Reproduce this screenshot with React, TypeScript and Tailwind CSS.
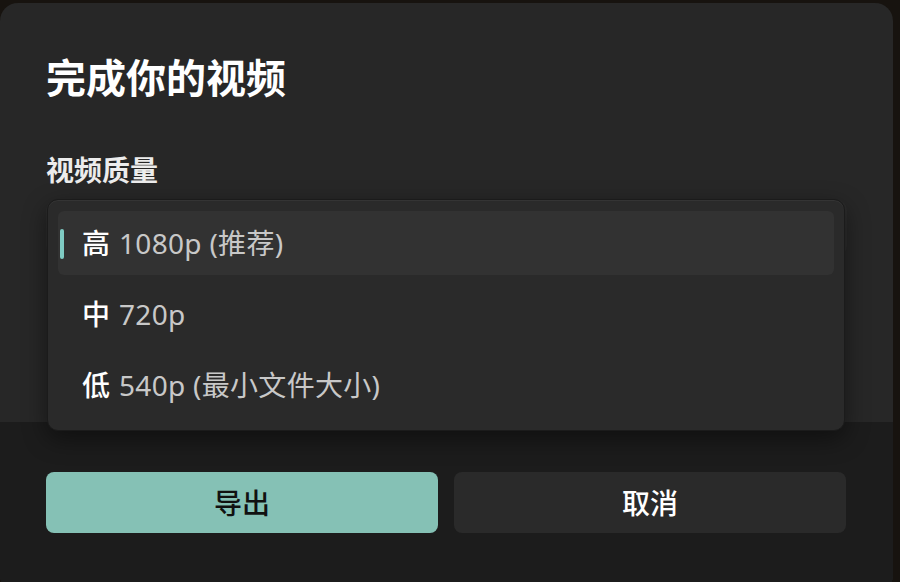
import { useState } from "react";

const QUALITIES = [
  { key: "high", tag: "高", label: "1080p (推荐)" },
  { key: "mid", tag: "中", label: "720p" },
  { key: "low", tag: "低", label: "540p (最小文件大小)" },
];

const font = { fontFamily: '"Noto Sans", "Noto Sans CJK SC", sans-serif' };

export default function App() {
  const [selected, setSelected] = useState("high");

  return (
    <div className="w-[900px] h-[582px] overflow-hidden bg-[#17130f] pt-[3px]" style={font}>
      <div className="w-[893px] h-[590px] rounded-[18px] bg-[#272727] flex flex-col overflow-hidden">
        {/* body */}
        <div className="h-[419px] px-[46px] pt-[50px] flex flex-col">
          <h1 className="text-[40px] leading-[50px] font-bold text-white">完成你的视频</h1>
          <p className="mt-[49px] text-[28px] leading-[36px] font-semibold text-[#ececec]">视频质量</p>

          <div className="relative mt-[12px]">
            <div className="h-[56px] rounded-[10px] bg-[#2c2c2c]" />
            <div className="absolute left-[1px] -top-[1px] w-[798px] rounded-[11px] border border-[#1b1b1b] bg-[#2a2a2a] pl-[10px] pr-[10px] pt-[11px] pb-[13px] flex flex-col gap-[7px] shadow-[0_8px_24px_rgba(0,0,0,0.45),inset_0_1px_0_rgba(255,255,255,0.05)]">
              {QUALITIES.map((q) => {
                const active = q.key === selected;
                return (
                  <button
                    key={q.key}
                    type="button"
                    onClick={() => setSelected(q.key)}
                    className={`relative h-[64px] rounded-[6px] pl-[24px] flex items-center text-left text-[28px] ${
                      active ? "bg-[#323232]" : ""
                    }`}
                  >
                    {active && (
                      <span className="absolute left-[2px] top-[18px] h-[30px] w-[4px] rounded-full bg-[#7fcbc3]" />
                    )}
                    <span className="text-white font-medium">{q.tag}</span>
                    <span className="ml-[9px] text-[#c8c8c8] tracking-[0.3px]">{q.label}</span>
                  </button>
                );
              })}
            </div>
          </div>
        </div>

        {/* footer */}
        <div className="flex-1 bg-[#1c1c1c] px-[46px] pt-[50px] flex gap-[16px] pr-[47px]">
          <button
            type="button"
            className="flex-1 h-[61px] rounded-[8px] bg-[#85c1b5] text-[28px] font-medium text-[#111]"
          >
            导出
          </button>
          <button
            type="button"
            className="flex-1 h-[61px] rounded-[8px] bg-[#2a2a2a] text-[28px] font-medium text-white"
          >
            取消
          </button>
        </div>
      </div>
    </div>
  );
}
